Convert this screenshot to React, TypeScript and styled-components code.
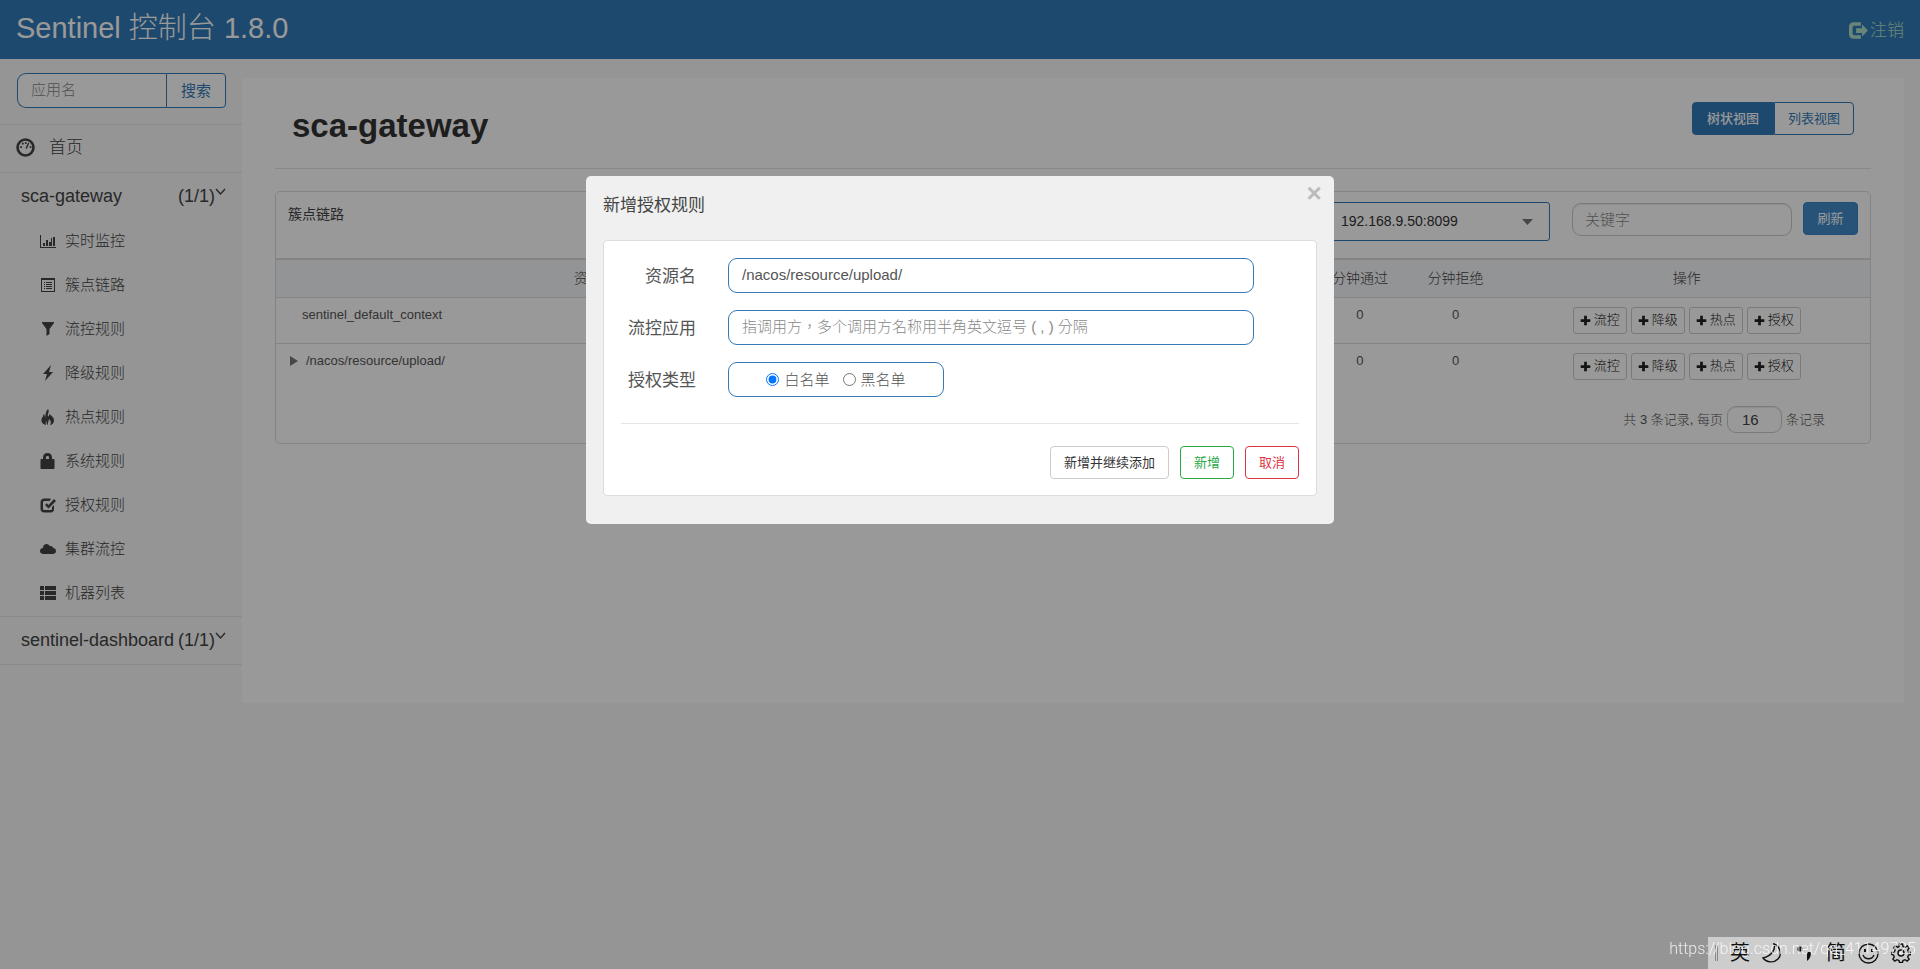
import React from 'react';
import styled, { createGlobalStyle, css } from 'styled-components';

const Global = createGlobalStyle`
  * { box-sizing: border-box; }
  body {
    margin: 0;
    background: #f8f8f8;
    color: #555;
    font-family: "Liberation Sans", "Noto Sans CJK SC", sans-serif;
    font-size: 15px;
    line-height: 20px;
  }
  button, input, select { font-family: inherit; margin: 0; }
  a { color: inherit; text-decoration: none; }
`;

const Page = styled.div`
  min-height: 100vh;
`;

const TopBar = styled.header`
  display: flex;
  align-items: center;
  justify-content: space-between;
  height: 59px;
  padding: 0 16px;
  background: #337ab7;
`;

const Brand = styled.a`
  color: #fff;
  font-size: 29px;
  line-height: 40px;
  padding-bottom: 4px;
  font-weight: 300;
`;

const Logout = styled.a`
  display: flex;
  align-items: center;
  gap: 2px;
  padding-top: 2px;
  color: #b0e0c8;
  font-size: 17px;
  font-weight: 300;
`;

const Columns = styled.div`
  display: flex;
  align-items: flex-start;
`;

const Sidebar = styled.nav`
  flex: 0 0 242px;
  min-width: 0;
  color: #444;
`;

const SearchForm = styled.form`
  display: flex;
  padding: 14px 16px 16px 17px;
  border-bottom: 1px solid #e7e7e7;
`;

const SearchInput = styled.input`
  flex: 1;
  width: 0;
  min-width: 0;
  height: 35px;
  padding: 0 13px 2px;
  border: 1px solid #337ab7;
  border-right: 0;
  border-radius: 9px 0 0 9px;
  background: #fff;
  font-size: 15px;
  font-weight: 300;
  &::placeholder { color: #888; }
`;

const SearchButton = styled.button`
  width: 60px;
  height: 35px;
  padding: 0 0 2px;
  border: 1px solid #337ab7;
  border-radius: 0 4px 4px 0;
  background: #fff;
  color: #337ab7;
  font-size: 15px;
  font-weight: 400;
`;

const HomeLink = styled.a`
  display: flex;
  align-items: center;
  gap: 14px;
  height: 48px;
  padding: 0 16px 2px;
  border-bottom: 1px solid #e7e7e7;
  font-size: 17px;
  font-weight: 300;
`;

const AppLink = styled.a`
  display: flex;
  align-items: center;
  height: 47px;
  padding: 0 16px 2px 21px;
  font-size: 18px;
`;

const AppCount = styled.span`
  margin-left: auto;
`;

const Chevron = styled.svg`
  align-self: flex-start;
  margin-top: 15px;
`;

const AppGroup = styled.section`
  border-bottom: 1px solid #e7e7e7;
`;

const SubMenu = styled.ul`
  list-style: none;
  margin: 0;
  padding: 0;
`;

const SubLink = styled.a`
  display: flex;
  align-items: center;
  gap: 9px;
  height: 44px;
  padding: 0 40px 2px;
  font-size: 15px;
  font-weight: 300;
`;

const Main = styled.main`
  flex: 1;
  min-width: 0;
  min-height: 625px;
  margin: 19px 16px 0 0;
  padding: 0 33px;
  background: #fff;
`;

const PageHead = styled.div`
  display: flex;
  align-items: flex-start;
  justify-content: space-between;
  padding: 24px 17px 0 17px;
  height: 91px;
  border-bottom: 1px solid #e5e5e5;
`;

const Title = styled.h1`
  margin: 0;
  font-size: 33px;
  line-height: 48px;
  color: #333;
`;

const ViewSwitch = styled.div`
  display: flex;
`;

const ViewButton = styled.button<{ $active?: boolean }>`
  height: 33px;
  padding: ${p => (p.$active ? '0 14px 2px' : '0 13px 2px')};
  border: 1px solid #337ab7;
  border-radius: ${p => (p.$active ? '4px 0 0 4px' : '0 4px 4px 0')};
  background: ${p => (p.$active ? '#337ab7' : '#fff')};
  color: ${p => (p.$active ? '#fff' : '#337ab7')};
  font-size: 13px;
  font-weight: ${p => (p.$active ? 500 : 400)};
`;

const Card = styled.section`
  margin-top: 22px;
  border: 1px solid #ddd;
  border-radius: 5px;
`;

const CardHead = styled.div`
  display: flex;
  align-items: flex-start;
  height: 66px;
  padding: 10px 12px;
`;

const CardTitle = styled.h2`
  flex: 1;
  margin: 0;
  padding-top: 2px;
  font-size: 14px;
  line-height: 20px;
  font-weight: 400;
  color: #444;
`;

const SelectWrap = styled.label`
  display: flex;
  align-items: center;
  width: 264px;
  height: 39px;
  margin-right: 22px;
  padding-right: 16px;
  border: 1px solid #337ab7;
  border-radius: 3px;
`;

const MachineSelect = styled.select`
  flex: 1;
  height: 37px;
  padding: 0 0 2px 54px;
  border: 0;
  background: transparent;
  appearance: none;
  font-size: 14px;
  color: #333;
`;

const KeywordInput = styled.input`
  width: 220px;
  height: 33px;
  margin: 1px 11px 0 0;
  padding: 0 12px;
  border: 1px solid #ccc;
  border-radius: 9px;
  box-shadow: inset 0 1px 1px rgba(0, 0, 0, 0.08);
  font-size: 15px;
  font-weight: 300;
  &::placeholder { color: #888; }
`;

const RefreshButton = styled.button`
  height: 33px;
  width: 55px;
  padding: 0 0 2px;
  border: 1px solid #3a82c1;
  border-radius: 4px;
  background: #428bca;
  color: #fff;
  font-size: 13px;
  font-weight: 400;
`;

const Table = styled.table`
  width: 100%;
  table-layout: fixed;
  border-collapse: collapse;
  th {
    height: 38px;
    padding: 0;
    border-top: 2px solid #ddd;
    background: #f5f7fa;
    font-size: 14px;
    line-height: 20px;
    font-weight: 300;
    color: #444;
  }
  td {
    height: 46px;
    padding: 9px 0;
    border-top: 1px solid #ddd;
    vertical-align: top;
    text-align: center;
    font-size: 13px;
    line-height: 16px;
  }
  td:first-child { text-align: left; }
`;

const Col = styled.col<{ $w?: string }>`
  width: ${p => p.$w ?? 'auto'};
`;

const Resource = styled.span<{ $leaf?: boolean }>`
  display: flex;
  align-items: center;
  gap: 8px;
  padding-left: ${p => (p.$leaf ? 26 : 14)}px;
`;

const Actions = styled.div`
  display: flex;
  justify-content: center;
  gap: 4px;
`;

const ActionButton = styled.button`
  display: flex;
  align-items: center;
  gap: 3px;
  height: 27px;
  padding: 0 6px;
  border: 1px solid #ccc;
  border-radius: 3px;
  background: #fff;
  color: #222;
  font-size: 13px;
  line-height: 20px;
  font-weight: 300;
`;

const Pager = styled.div`
  display: flex;
  align-items: center;
  justify-content: flex-end;
  gap: 4px;
  padding: 17px 45px 10px;
  font-size: 13px;
  font-weight: 300;
`;

const PageSize = styled.input`
  width: 55px;
  height: 27px;
  padding: 0 14px;
  border: 1px solid #ccc;
  border-radius: 9px;
  box-shadow: inset 0 1px 1px rgba(0, 0, 0, 0.08);
  font-size: 15px;
  color: #444;
`;

const Overlay = styled.div`
  position: fixed;
  inset: 0;
  display: flex;
  align-items: flex-start;
  justify-content: center;
  padding-top: 176px;
  background: rgba(0, 0, 0, 0.4);
`;

const Dialog = styled.div`
  position: relative;
  width: 748px;
  padding: 18px 17px 28px;
  border-radius: 5px;
  background: #f0f0f0;
`;

const DialogTitle = styled.h3`
  margin: 0 0 22px;
  font-size: 17px;
  line-height: 24px;
  font-weight: 400;
  color: #444;
`;

const CloseButton = styled.button`
  position: absolute;
  top: 6px;
  right: 9px;
  width: 22px;
  height: 22px;
  padding: 0;
  border: 0;
  background: none;
  color: #bbb;
  font-size: 26px;
  line-height: 22px;
  font-weight: 700;
`;

const DialogForm = styled.form`
  padding: 17px 17px 16px;
  border: 1px solid #ddd;
  border-radius: 4px;
  background: #fff;
`;

const fieldBox = css`
  height: 35px;
  border: 1px solid #337ab7;
  border-radius: 9px;
  background: #fff;
`;

const Field = styled.div`
  display: grid;
  grid-template-columns: 75px 1fr;
  column-gap: 32px;
  align-items: center;
  margin-bottom: 17px;
`;

const FieldLabel = styled.label`
  padding-top: 2px;
  text-align: right;
  font-size: 17px;
  line-height: 24px;
  color: #555;
`;

const TextField = styled.input`
  ${fieldBox}
  width: 526px;
  padding: 0 13px 2px;
  font-size: 15px;
  font-weight: 300;
  color: #555;
  outline: 0;
  &::placeholder {
    color: #888;
    font-family: "Liberation Sans", "Noto Sans CJK TC", sans-serif;
  }
`;

const RadioBox = styled.div`
  ${fieldBox}
  display: flex;
  align-items: center;
  justify-content: center;
  gap: 13px;
  width: 216px;
`;

const RadioLabel = styled.label`
  display: flex;
  align-items: center;
  gap: 5px;
  font-size: 15px;
  font-weight: 300;
  input { width: 13px; height: 13px; accent-color: #0075ff; }
`;

const Footer = styled.div`
  display: flex;
  justify-content: flex-end;
  gap: 11px;
  margin-top: 26px;
  padding-top: 22px;
  border-top: 1px solid #e5e5e5;
`;

const FooterButton = styled.button<{ $tone: string; $text?: string }>`
  height: 33px;
  padding: 0 13px 2px;
  border: 1px solid ${p => p.$tone};
  border-radius: 4px;
  background: #fff;
  color: ${p => p.$text ?? p.$tone};
  font-size: 13px;
  font-weight: 400;
`;

const ImeBar = styled.aside`
  position: fixed;
  right: 0;
  bottom: 0;
  display: flex;
  align-items: center;
  gap: 12px;
  height: 32px;
  padding: 0 9px 0 7px;
  background: #cdcdcd;
  color: #111;
  font-size: 20px;
  line-height: 32px;
`;

const Watermark = styled.span`
  position: fixed;
  right: 4px;
  bottom: 9px;
  color: rgba(255, 255, 255, 0.8);
  font-size: 16px;
  line-height: 22px;
  font-family: Roboto, sans-serif;
  font-weight: 300;
`;

const glyphs: Record<string, React.ReactNode> = {
  chart: <path d="M1 2v12h15v1H0V2zM3 10h2v3H3zM6 7h2v6H6zM9 9h2v4H9zM11 5h1v8h-1zM13 4h2v9h-2z" />,
  list: <path fillRule="evenodd" d="M1 1h14v14H1zM2 3v11h12V3zM4 5h1v1H4zM6 5h6v1H6zM4 7h1v1H4zM6 7h6v1H6zM4 9h1v1H4zM6 9h6v1H6zM4 11h1v1H4zM6 11h6v1H6z" />,
  filter: <path d="M2 1h12v1L9.500 8v5L6.500 15V8L2 2z" />,
  flash: <path d="M11 0L3 9h4l-2 7 8-9H9z" />,
  fire: <path d="M8 0c2 3-1 5 0 7 .5 1 1.500 0 1-2 3 2 5.500 4 5 7-.3 2-2 4-4 4 1.500-2 1-4-1-6 0 2-1.500 3-1 6-1-.5-2-2-1.500-4-1 .5-1 2-.5 4C2 15 .5 12 2 9c.5-1 1.500-2 1.500-4C5 6 5 7 5 9c1-3 0-6 3-9z" />,
  lock: <path fillRule="evenodd" d="M3 6V4.500C3 2 4.500 0 7.500 0s4.500 2 4.500 4.500V6h1.500c.6 0 1 .4 1 1v8c0 .6-.4 1-1 1H1.500c-.6 0-1-.4-1-1V7c0-.6.4-1 1-1zM6 6h3V4.500C9 3.500 8.500 3 7.500 3S6 3.500 6 4.500z" />,
  check: <path d="M11 2L9.500 4H4.500C3.500 4 3 4.500 3 5.500v6c0 1 .5 1.500 1.500 1.500h6c1 0 1.500-.5 1.500-1.500V10l2-2v4c0 2-1 3.500-3.500 3.500h-6C2 15.500.5 14 .5 12V5.500C.5 3 2 1.500 4.500 1.500H10zM14 2l2 2-7.500 7.500L5 8l1.800-1.800 1.700 1.700z" />,
  cloud: <path d="M3.500 13C1.500 13 0 11.800 0 10s1.300-3 3-3c0-3 1.800-4 3.500-4C8 3 9 3.800 9.700 5 12 4.500 13 6 13.200 7 15 7.200 16 8.400 16 10s-1.200 3-3 3z" />,
  rows: <path d="M0 1h4v4H0zM5 1h11v4H5zM0 6h4v4H0zM5 6h11v4H5zM0 11h4v4H0zM5 11h11v4H5z" />,
  plus: <path d="M6 1h4v5h5v4h-5v5H6v-5H1V6h5z" />,
  home: <><circle cx="8" cy="8" r="6.700" fill="none" stroke="currentColor" strokeWidth="2.200" /><path d="M3.500 7h1.500v1.500H3.500zM5 4h1.500v1.500H5zM7.500 3.500H9V5H7.500zM11.500 7H13v1.500h-1.500zM10.200 4l1 .5-2 4.500-1.300-.3z" /></>,
  exit: <path d="M10 1v3H4.500C3.500 4 3 4.500 3 5.500v5c0 1 .5 1.500 1.500 1.500H10v3H4C1.500 15 0 13.500 0 11V5c0-2.500 1.500-4 4-4zM11 3l5 5-5 5V10H6V6h5z" />,
};

function Icon({ name, size = 16 }: { name: string; size?: number }) {
  return (
    <svg width={size} height={size} viewBox="0 0 16 16" fill="currentColor" aria-hidden="true">
      {glyphs[name]}
    </svg>
  );
}

function AppRow({ name }: { name: string }) {
  return (
    <AppLink href="#">
      {name}
      <AppCount>(1/1)</AppCount>
      <Chevron width="11" height="8" viewBox="0 0 11 8" fill="none" stroke="currentColor" strokeWidth="1.400">
        <path d="M1 1l4.500 5L10 1" />
      </Chevron>
    </AppLink>
  );
}

const menu = [
  ['chart', '实时监控'],
  ['list', '簇点链路'],
  ['filter', '流控规则'],
  ['flash', '降级规则'],
  ['fire', '热点规则'],
  ['lock', '系统规则'],
  ['check', '授权规则'],
  ['cloud', '集群流控'],
  ['rows', '机器列表'],
];

const stats = ['通过QPS', '拒绝QPS', '线程数', '平均RT', '分钟通过', '分钟拒绝'];
const resources = [
  { name: 'sentinel_default_context', leaf: true },
  { name: '/nacos/resource/upload/', leaf: false },
];
const actions = ['流控', '降级', '热点', '授权'];

export default function App() {
  return (
    <Page>
      <Global />
      <TopBar>
        <Brand href="#">Sentinel 控制台 1.8.0</Brand>
        <Logout href="#"><Icon name="exit" size={19} />注销</Logout>
      </TopBar>
      <Columns>
        <Sidebar>
          <SearchForm>
            <SearchInput placeholder="应用名" aria-label="应用名" />
            <SearchButton type="button">搜索</SearchButton>
          </SearchForm>
          <HomeLink href="#"><Icon name="home" size={19} />首页</HomeLink>
          <AppGroup>
            <AppRow name="sca-gateway" />
            <SubMenu>
              {menu.map(([icon, label]) => (
                <li key={label}><SubLink href="#"><Icon name={icon} />{label}</SubLink></li>
              ))}
            </SubMenu>
          </AppGroup>
          <AppGroup><AppRow name="sentinel-dashboard" /></AppGroup>
        </Sidebar>
        <Main>
          <PageHead>
            <Title>sca-gateway</Title>
            <ViewSwitch>
              <ViewButton $active>树状视图</ViewButton>
              <ViewButton>列表视图</ViewButton>
            </ViewSwitch>
          </PageHead>
          <Card>
            <CardHead>
              <CardTitle>簇点链路</CardTitle>
              <SelectWrap>
                <MachineSelect aria-label="机器">
                  <option>192.168.9.50:8099</option>
                </MachineSelect>
                <svg width="11" height="6" viewBox="0 0 11 6" fill="#777"><path d="M0 0h11L5.500 6z" /></svg>
              </SelectWrap>
              <KeywordInput placeholder="关键字" aria-label="关键字" />
              <RefreshButton>刷新</RefreshButton>
            </CardHead>
            <Table>
              <colgroup>
                <Col $w="40%" />
                <Col /><Col /><Col /><Col />
                <Col $w="6%" /><Col $w="6%" />
                <Col $w="23%" />
              </colgroup>
              <thead>
                <tr>
                  <th>资源名</th>
                  {stats.map(s => <th key={s}>{s}</th>)}
                  <th>操作</th>
                </tr>
              </thead>
              <tbody>
                {resources.map(r => (
                  <tr key={r.name}>
                    <td>
                      <Resource $leaf={r.leaf}>
                        {!r.leaf && <svg width="8" height="10" viewBox="0 0 8 10" fill="#777"><path d="M0 0l8 5-8 5z" /></svg>}
                        {r.name}
                      </Resource>
                    </td>
                    {stats.map(s => <td key={s}>0</td>)}
                    <td>
                      <Actions>
                        {actions.map(a => (
                          <ActionButton key={a}><Icon name="plus" size={11} />{a}</ActionButton>
                        ))}
                      </Actions>
                    </td>
                  </tr>
                ))}
              </tbody>
            </Table>
            <Pager>
              <label htmlFor="page-size">共 3 条记录, 每页</label>
              <PageSize id="page-size" defaultValue="16" />
              <span>条记录</span>
            </Pager>
          </Card>
        </Main>
      </Columns>
      <Overlay>
        <Dialog role="dialog" aria-modal="true" aria-labelledby="dialog-title">
          <DialogTitle id="dialog-title">新增授权规则</DialogTitle>
          <CloseButton aria-label="关闭">×</CloseButton>
          <DialogForm>
            <Field>
              <FieldLabel htmlFor="resource">资源名</FieldLabel>
              <TextField id="resource" defaultValue="/nacos/resource/upload/" />
            </Field>
            <Field>
              <FieldLabel htmlFor="origin">流控应用</FieldLabel>
              <TextField id="origin" placeholder="指调用方，多个调用方名称用半角英文逗号 ( , ) 分隔" autoFocus />
            </Field>
            <Field>
              <FieldLabel as="span">授权类型</FieldLabel>
              <RadioBox role="radiogroup" aria-label="授权类型">
                <RadioLabel><input type="radio" name="strategy" defaultChecked />白名单</RadioLabel>
                <RadioLabel><input type="radio" name="strategy" />黑名单</RadioLabel>
              </RadioBox>
            </Field>
            <Footer>
              <FooterButton type="button" $tone="#ccc" $text="#333">新增并继续添加</FooterButton>
              <FooterButton type="button" $tone="#28a745">新增</FooterButton>
              <FooterButton type="button" $tone="#dc3545">取消</FooterButton>
            </Footer>
          </DialogForm>
        </Dialog>
      </Overlay>
      <ImeBar>
        <svg width="3" height="16" viewBox="0 0 3 16" stroke="#888"><path d="M.5 0v16M2.500 0v16" /></svg>
        <span>英</span>
        <svg width="20" height="20" viewBox="0 0 20 20" fill="none" stroke="currentColor" strokeWidth="1.400"><path d="M12 1c2 6-3 12-11 14 4 5 11 5 15 1 4-4 3-12-4-15z" /></svg>
        <svg width="20" height="20" viewBox="0 0 20 20" fill="currentColor"><circle cx="6" cy="6" r="2.600" /><path d="M13 9h4c0 4-1 7-4 9z" /></svg>
        <span>简</span>
        <svg width="21" height="21" viewBox="0 0 21 21" fill="none" stroke="currentColor" strokeWidth="1.400"><circle cx="10.500" cy="10.500" r="9.500" /><path d="M5 12c2 5 9 5 11 0" /><path d="M7 6v3M14 6v3" strokeWidth="2" /></svg>
        <svg width="20" height="20" viewBox="0 0 20 20" fill="none" stroke="currentColor" strokeWidth="1.400"><circle cx="10" cy="10" r="3" /><path d="M8.500 1h3l.5 2.500 2 .8 2.200-1.400 1.900 1.900-1.400 2.200.8 2 2.500.5v2l-2.500.5-.8 2 1.400 2.200-1.900 1.900-2.200-1.400-2 .8-.5 2h-3l-.5-2-2-.8-2.200 1.400-1.900-1.900 1.400-2.200-.8-2L.8 11.500v-2L3.300 9l.8-2-1.400-2.200 1.900-1.900 2.200 1.400 1.200-.8z" /></svg>
      </ImeBar>
      <Watermark>https://blog.csdn.net/qq_41149725</Watermark>
    </Page>
  );
}
